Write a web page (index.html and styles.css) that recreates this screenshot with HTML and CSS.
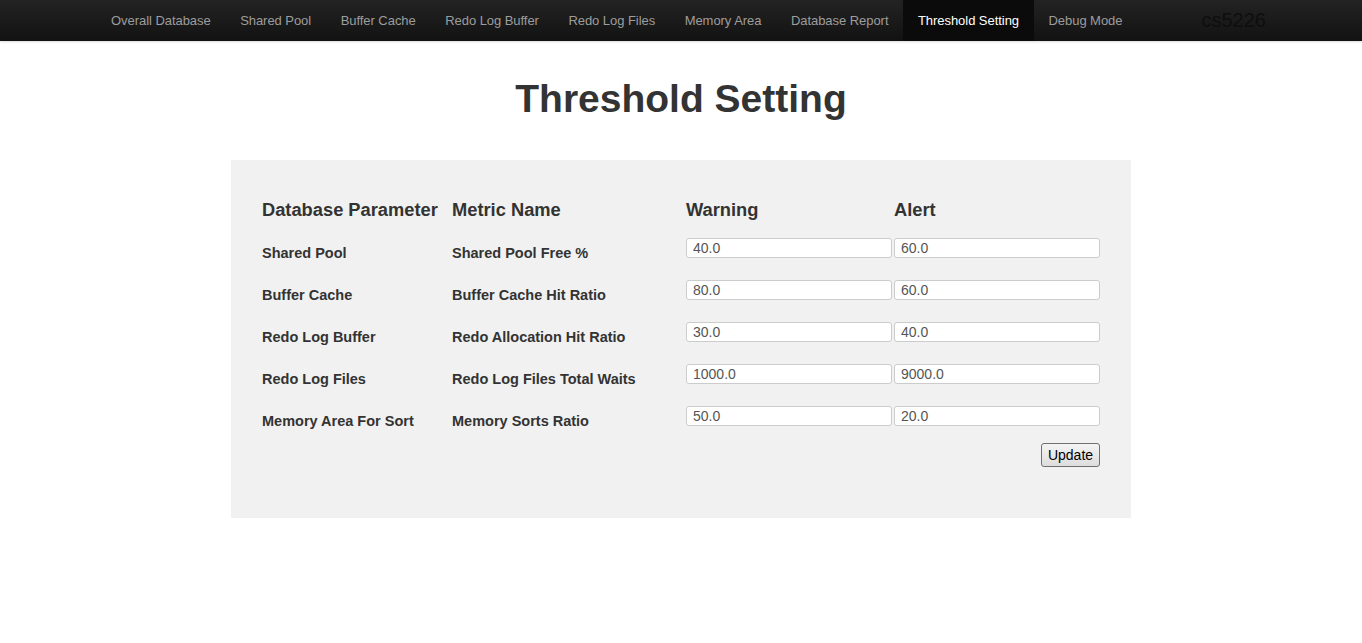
FILE: index.html
```html
<!DOCTYPE html>
<html>
<head>
<meta charset="utf-8">
<title>Threshold Setting</title>
<link rel="stylesheet" href="styles.css">
</head>
<body>
<nav class="navbar">
  <div class="nav-inner">
    <ul class="nav-links">
      <li><a href="#">Overall Database</a></li>
      <li><a href="#">Shared Pool</a></li>
      <li><a href="#">Buffer Cache</a></li>
      <li><a href="#">Redo Log Buffer</a></li>
      <li><a href="#">Redo Log Files</a></li>
      <li><a href="#">Memory Area</a></li>
      <li><a href="#">Database Report</a></li>
      <li class="active"><a href="#">Threshold Setting</a></li>
      <li><a href="#">Debug Mode</a></li>
    </ul>
    <span class="brand">cs5226</span>
  </div>
</nav>
<h1 class="title">Threshold Setting</h1>
<div class="panel">
  <form class="grid">
    <div class="head">Database Parameter</div>
    <div class="head">Metric Name</div>
    <div class="head">Warning</div>
    <div class="head">Alert</div>

    <div class="cell">Shared Pool</div>
    <div class="cell">Shared Pool Free %</div>
    <div class="field"><input type="text" value="40.0"></div>
    <div class="field"><input type="text" value="60.0"></div>

    <div class="cell">Buffer Cache</div>
    <div class="cell">Buffer Cache Hit Ratio</div>
    <div class="field"><input type="text" value="80.0"></div>
    <div class="field"><input type="text" value="60.0"></div>

    <div class="cell">Redo Log Buffer</div>
    <div class="cell">Redo Allocation Hit Ratio</div>
    <div class="field"><input type="text" value="30.0"></div>
    <div class="field"><input type="text" value="40.0"></div>

    <div class="cell">Redo Log Files</div>
    <div class="cell">Redo Log Files Total Waits</div>
    <div class="field"><input type="text" value="1000.0"></div>
    <div class="field"><input type="text" value="9000.0"></div>

    <div class="cell">Memory Area For Sort</div>
    <div class="cell">Memory Sorts Ratio</div>
    <div class="field"><input type="text" value="50.0"></div>
    <div class="field"><input type="text" value="20.0"></div>

    <div class="actions"><button type="button" class="btn">Update</button></div>
  </form>
</div>
</body>
</html>
```
FILE: styles.css
```css
html, body {
  margin: 0;
  padding: 0;
  background: #fff;
  font-family: "Liberation Sans", Arial, sans-serif;
  color: #333;
}

.navbar {
  height: 41px;
  background: linear-gradient(to bottom, #232323, #121212);
  box-shadow: 0 1px 2px rgba(0,0,0,0.15);
}

.nav-inner {
  width: 1170px;
  margin: 0 auto;
  display: flex;
  align-items: center;
  height: 41px;
}

.nav-links {
  list-style: none;
  margin: 0;
  padding: 0;
  display: flex;
  height: 41px;
}

.nav-links li a {
  display: block;
  padding: 0 14.5px 0 15px;
  line-height: 41px;
  font-size: 13px;
  letter-spacing: -0.05px;
  color: #9d9d9d;
  text-decoration: none;
}

.nav-links li.active a {
  color: #fff;
  background: #0b0b0b;
}

.brand {
  margin-left: auto;
  font-size: 20px;
  color: #0e0e0e;
  line-height: 41px;
}

.title {
  margin: 0;
  padding-top: 36px;
  height: 83px;
  box-sizing: content-box;
  font-size: 39px;
  line-height: 44px;
  font-weight: bold;
  text-align: center;
  color: #333;
}

.panel {
  width: 900px;
  margin: 0 auto;
  background: #f1f1f1;
  padding: 31px 31px 51px 31px;
  box-sizing: border-box;
  height: 358px;
}

.grid {
  margin: 0;
  display: grid;
  grid-template-columns: 190px 234px 208px 208px;
  grid-template-rows: 40px repeat(5, 42px) auto;
}

.head {
  font-size: 18.3px;
  font-weight: bold;
  line-height: 20px;
  align-self: center;
  padding-bottom: 2px;
}

.cell {
  font-size: 14.5px;
  font-weight: bold;
  line-height: 20px;
  align-self: center;
  padding-top: 2px;
}

.field {
  padding-top: 7px;
}

.field input {
  display: block;
  width: 206px;
  height: 20px;
  box-sizing: border-box;
  border: 1px solid #cccccc;
  border-radius: 3px;
  background: #fff;
  padding: 0 6px;
  font-family: "Liberation Sans", Arial, sans-serif;
  font-size: 14px;
  color: #555;
  outline: none;
}

.actions {
  grid-column: 1 / 5;
  display: flex;
  justify-content: flex-end;
  padding-top: 2px;
  padding-right: 2px;
}

.btn {
  width: 59px;
  height: 24px;
  padding: 0;
  border: 1px solid #707070;
  border-radius: 3px;
  background: linear-gradient(to bottom, #f4f4f4, #dddddd);
  font-family: "Liberation Sans", Arial, sans-serif;
  font-size: 14px;
  color: #000;
}
```
